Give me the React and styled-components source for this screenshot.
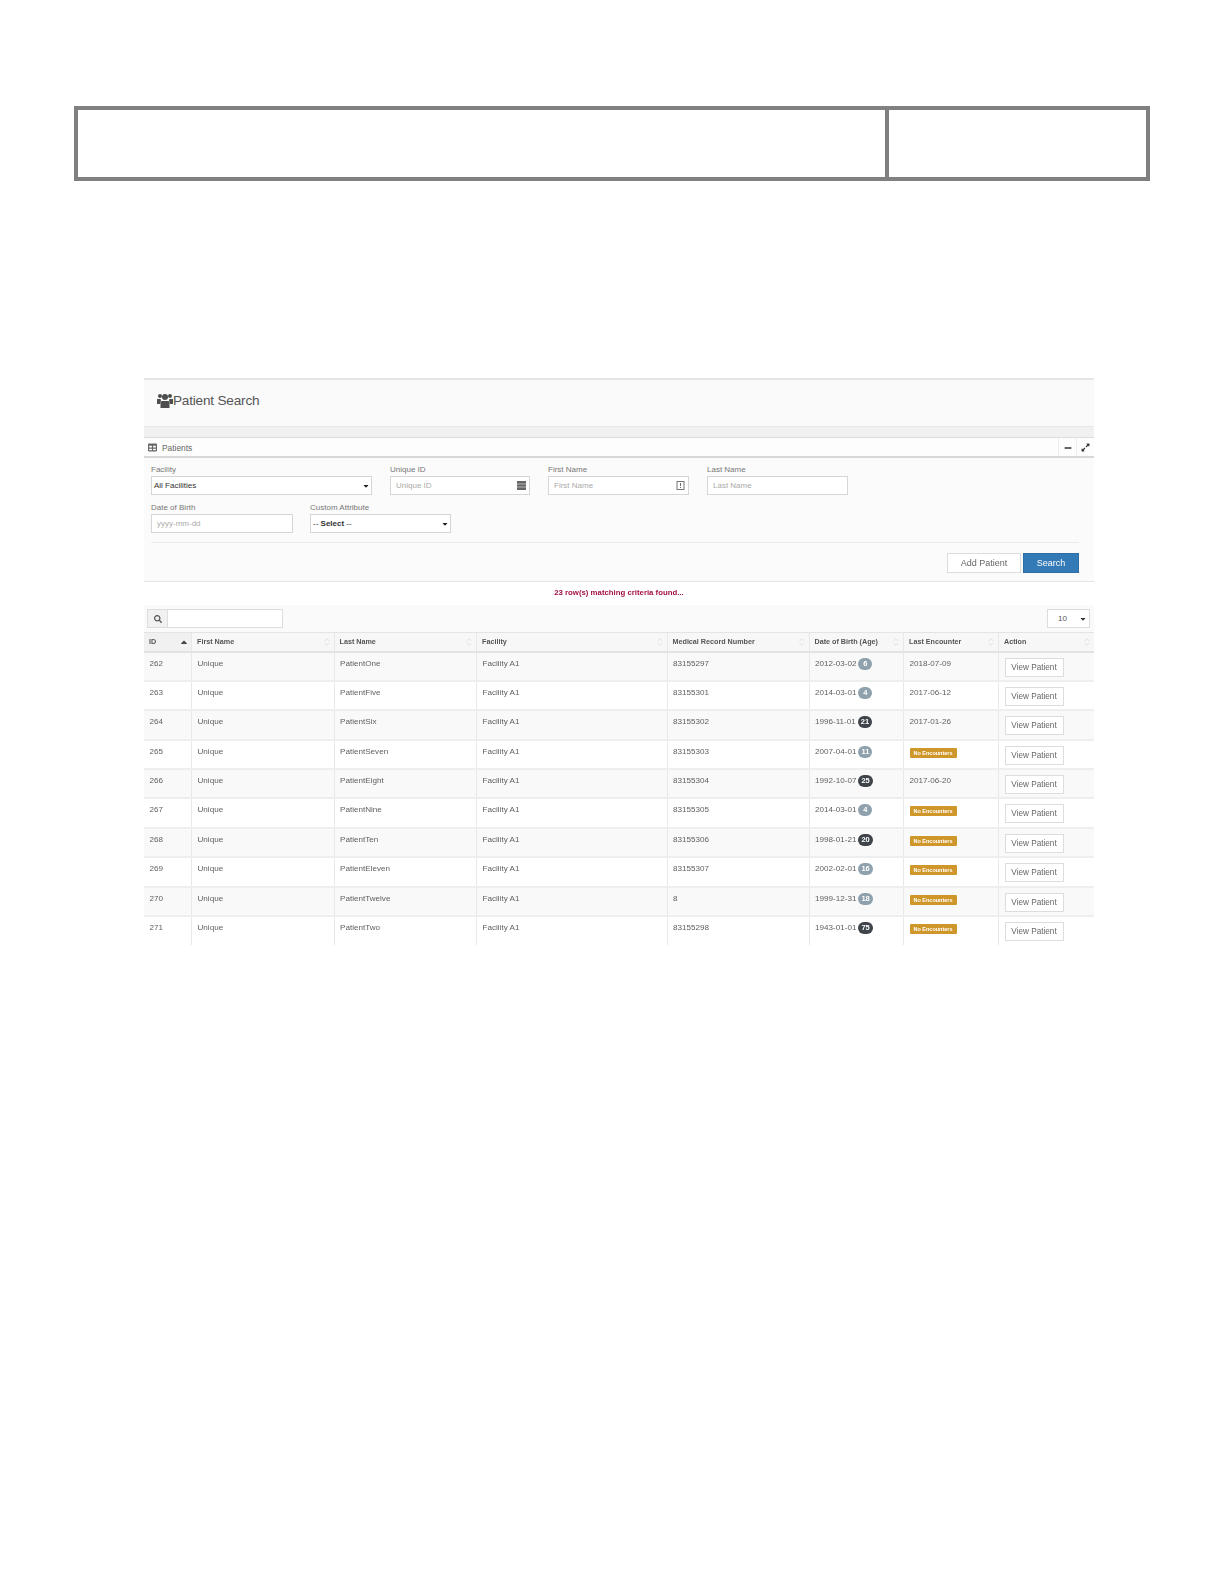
import React from 'react';
import styled, { createGlobalStyle } from 'styled-components';
import { FaTable, FaMinus, FaExpandAlt, FaSearch, FaCaretDown, FaCaretUp } from 'react-icons/fa';
import { LuChevronsUpDown } from 'react-icons/lu';

const GlobalStyle = createGlobalStyle`
  * { box-sizing: border-box; }
  html, body { margin: 0; padding: 0; background: #fff; }
  body { font-family: "Liberation Sans", Arial, sans-serif; color: #555; }
`;

const Page = styled.div`
  width: 1224px;
  height: 1584px;
  padding: 106px 74px 0;
  overflow: hidden;
`;

const TitleBox = styled.div`
  display: grid;
  grid-template-columns: 811px 1fr;
  height: 75px;
  border: 4px solid #808080;
`;

const TitleCell = styled.div`
  &:first-child { border-right: 4px solid #808080; }
`;

const Panel = styled.div`
  width: 950px;
  margin: 197px 0 0 70px;
  filter: blur(0.35px);
`;

const PageHead = styled.div`
  display: flex;
  align-items: center;
  gap: 0;
  height: 48px;
  padding: 0 0 5px 13px;
  background: #fafafa;
  border-top: 2px solid #e6e6e6;
  color: #555;
  font-size: 13.6px;
  letter-spacing: -0.2px;
`;

const UsersIcon = styled.svg`
  width: 16px;
  height: 15px;
  color: #4d4d4d;
`;

const Band = styled.div`
  height: 12px;
  background: #f1f1f1;
  border-top: 1px solid #e8e8e8;
  border-bottom: 1px solid #dcdcdc;
`;

const PanelBar = styled.div`
  display: flex;
  align-items: center;
  height: 20px;
  padding-left: 4px;
  background: #fdfdfd;
  border-bottom: 2px solid #d8d8d8;
  font-size: 8.4px;
  color: #666;
  svg { font-size: 9px; color: #666; }
`;

const PanelTitle = styled.span`
  flex: 1;
  margin-left: 5px;
  padding-top: 2px;
`;

const BarAction = styled.span`
  display: flex;
  align-items: center;
  justify-content: center;
  width: 18px;
  height: 18px;
  padding-top: 1px;
  border-left: 1px solid #eee;
  svg { font-size: ${p => p.$size || 8}px; color: #333; }
`;

const FormArea = styled.div`
  height: 124px;
  padding: 6px 15px 0 7px;
  background: #fbfbfb;
  border-bottom: 1px solid #e6e6e6;
`;

const FormRow = styled.div`
  display: flex;
  gap: ${p => p.$gap}px;
  height: ${p => p.$h || 38}px;
`;

const Field = styled.div`
  width: ${p => p.$w}px;
`;

const Label = styled.div`
  height: 12px;
  font-size: 8px;
  line-height: 12px;
  color: #777;
`;

const InputBox = styled.div`
  display: flex;
  align-items: center;
  justify-content: space-between;
  height: 19px;
  padding: 0 ${p => p.$select ? 1 : 3}px 0 ${p => p.$select ? 2 : 5}px;
  background: #fff;
  border: 1px solid #d6d6d6;
  font-size: 8px;
  color: ${p => p.$select ? '#333' : '#aaa'};
  svg { font-size: 8px; color: #222; }
`;

const Dark = styled.span`
  font-weight: ${p => p.$bold ? 700 : 400};
  color: #333;
`;

const FieldIcon = styled.svg`
  width: 9px;
  height: 9px;
  flex: none;
`;

const ButtonRow = styled.div`
  display: flex;
  justify-content: flex-end;
  gap: 2px;
  height: 38px;
  padding-top: 10px;
  border-top: 1px solid #ececec;
`;

const Button = styled.div`
  display: flex;
  align-items: center;
  justify-content: center;
  width: ${p => p.$w}px;
  height: 20px;
  font-size: 9px;
  color: ${p => p.$primary ? '#fff' : '#666'};
  background: ${p => p.$primary ? '#337ab7' : '#fff'};
  border: 1px solid ${p => p.$primary ? '#2e6da4' : '#ddd'};
`;

const Message = styled.div`
  height: 23px;
  font-size: 7.8px;
  font-weight: 700;
  line-height: 22px;
  text-align: center;
  color: #a5123f;
`;

const Toolbar = styled.div`
  display: flex;
  align-items: center;
  justify-content: space-between;
  height: 27px;
  padding: 0 4px 0 3px;
  background: #fafafa;
`;

const SearchGroup = styled.div`
  display: flex;
  width: 136px;
  height: 19px;
  background: #fff;
  border: 1px solid #ddd;
`;

const SearchAddon = styled.div`
  display: flex;
  align-items: center;
  justify-content: center;
  width: 20px;
  background: #f1f1f1;
  border-right: 1px solid #ddd;
  svg { font-size: 8px; color: #555; }
`;

const PageSize = styled.div`
  display: flex;
  align-items: center;
  justify-content: space-between;
  width: 43px;
  height: 19px;
  padding: 0 2px 0 10px;
  background: #fff;
  border: 1px solid #ddd;
  font-size: 8px;
  color: #555;
  svg { font-size: 8px; color: #333; }
`;

const Table = styled.table`
  width: 950px;
  table-layout: fixed;
  border-collapse: collapse;
  font-size: 8.1px;
  color: #5f5f5f;
`;

const Col = styled.col`
  width: ${p => p.$w}px;
`;

const Th = styled.th`
  height: 19px;
  padding: 0 5px;
  background: #f7f7f7;
  border-top: 1px solid #e4e4e4;
  border-bottom: 2px solid #e2e2e2;
  border-left: 1px solid #e8e8e8;
  font-size: 7.2px;
  font-weight: 700;
  text-align: left;
  color: #555;
  &:first-child { border-left: 0; background: #f1f1f1; }
`;

const ThInner = styled.div`
  display: flex;
  align-items: center;
  justify-content: space-between;
  svg { font-size: 10px; color: ${p => p.$active ? '#444' : '#ddd'}; flex: none; margin-right: -3px; }
`;

const Tr = styled.tr`
  background: ${p => p.$odd ? '#f9f9f9' : '#fff'};
`;

const Td = styled.td`
  height: 29.4px;
  padding: 5px 5.5px 0;
  vertical-align: top;
  border-top: 2px solid #eeeeee;
  border-left: 1px solid #e8e8e8;
  white-space: nowrap;
  line-height: 11px;
  &:first-child { border-left: 0; }
`;

const ActionTd = styled(Td)`
  padding-top: 5px;
`;

const AgeBadge = styled.span`
  display: inline-block;
  min-width: 14px;
  height: 12px;
  margin-left: 2px;
  padding: 0 3px;
  border-radius: 6px;
  background: ${p => p.$adult ? '#3f444a' : '#8fa1ad'};
  color: #fff;
  font-size: 7.5px;
  font-weight: 700;
  line-height: 12px;
  text-align: center;
  vertical-align: top;
`;

const NoEnc = styled.span`
  display: inline-block;
  width: 47px;
  height: 10px;
  margin-top: 2px;
  background: #cf962a;
  border-radius: 1px;
  color: #fff;
  font-size: 5.5px;
  font-weight: 700;
  line-height: 10px;
  text-align: center;
  vertical-align: top;
`;

const ViewButton = styled.div`
  display: flex;
  align-items: center;
  justify-content: center;
  width: 59px;
  height: 19px;
  background: #fff;
  border: 1px solid #ddd;
  font-size: 8.2px;
  color: #666;
`;

const columns = [
  { label: 'ID', w: 47.5 },
  { label: 'First Name', w: 142.5 },
  { label: 'Last Name', w: 142.5 },
  { label: 'Facility', w: 190.5 },
  { label: 'Medical Record Number', w: 142 },
  { label: 'Date of Birth (Age)', w: 94.5 },
  { label: 'Last Encounter', w: 95 },
  { label: 'Action', w: 95.5 },
];

const rows = [
  ['262', 'PatientOne', '83155297', '2012-03-02', '6', '2018-07-09'],
  ['263', 'PatientFive', '83155301', '2014-03-01', '4', '2017-06-12'],
  ['264', 'PatientSix', '83155302', '1996-11-01', '21', '2017-01-26'],
  ['265', 'PatientSeven', '83155303', '2007-04-01', '11', null],
  ['266', 'PatientEight', '83155304', '1992-10-07', '25', '2017-06-20'],
  ['267', 'PatientNine', '83155305', '2014-03-01', '4', null],
  ['268', 'PatientTen', '83155306', '1998-01-21', '20', null],
  ['269', 'PatientEleven', '83155307', '2002-02-01', '16', null],
  ['270', 'PatientTwelve', '8', '1999-12-31', '18', null],
  ['271', 'PatientTwo', '83155298', '1943-01-01', '75', null],
];

const App = () => (
  <Page>
    <GlobalStyle />
    <TitleBox>
      <TitleCell />
      <TitleCell />
    </TitleBox>

    <Panel>
      <PageHead>
        <UsersIcon viewBox="0 0 16 15" fill="currentColor">
          <circle cx="3" cy="3" r="2" />
          <circle cx="13" cy="3" r="2" />
          <circle cx="8" cy="4" r="3" />
          <path d="M0 6h3.5l.5 1.5L3 11H0zM16 6h-3.5l-.5 1.5 1 3.500h3z" />
          <path d="M4.500 8h7l1 1.500V15h-9V9.500z" />
        </UsersIcon>
        Patient Search
      </PageHead>
      <Band />
      <PanelBar>
        <FaTable />
        <PanelTitle>Patients</PanelTitle>
        <BarAction><FaMinus /></BarAction>
        <BarAction $size={9}><FaExpandAlt /></BarAction>
      </PanelBar>

      <FormArea>
        <FormRow $gap={18}>
          <Field $w={221}>
            <Label>Facility</Label>
            <InputBox $select><Dark>All Facilities</Dark><FaCaretDown /></InputBox>
          </Field>
          <Field $w={140}>
            <Label>Unique ID</Label>
            <InputBox>
              Unique ID
              <FieldIcon viewBox="0 0 9 9">
                <rect width="9" height="9" fill="#666" />
                <path d="M0 3h9M0 6h9" stroke="#ccc" strokeWidth="0.8" />
              </FieldIcon>
            </InputBox>
          </Field>
          <Field $w={141}>
            <Label>First Name</Label>
            <InputBox>
              First Name
              <FieldIcon viewBox="0 0 9 9">
                <rect x="1" y="0.500" width="7" height="8" fill="none" stroke="#777" />
                <path d="M4.500 2v3M4.500 6v1" stroke="#666" />
              </FieldIcon>
            </InputBox>
          </Field>
          <Field $w={141}>
            <Label>Last Name</Label>
            <InputBox>Last Name</InputBox>
          </Field>
        </FormRow>
        <FormRow $gap={17} $h={40}>
          <Field $w={142}>
            <Label>Date of Birth</Label>
            <InputBox>yyyy-mm-dd</InputBox>
          </Field>
          <Field $w={141}>
            <Label>Custom Attribute</Label>
            <InputBox $select><span>-- <Dark $bold>Select</Dark> --</span><FaCaretDown /></InputBox>
          </Field>
        </FormRow>
        <ButtonRow>
          <Button $w={74}>Add Patient</Button>
          <Button $w={56} $primary>Search</Button>
        </ButtonRow>
      </FormArea>

      <Message>23 row(s) matching criteria found...</Message>

      <Toolbar>
        <SearchGroup><SearchAddon><FaSearch /></SearchAddon></SearchGroup>
        <PageSize>10<FaCaretDown /></PageSize>
      </Toolbar>

      <Table>
        <colgroup>
          {columns.map(c => <Col key={c.label} $w={c.w} />)}
        </colgroup>
        <thead>
          <tr>
            {columns.map((c, i) => (
              <Th key={c.label}>
                <ThInner $active={i === 0}>
                  {c.label}
                  {i === 0 ? <FaCaretUp /> : <LuChevronsUpDown />}
                </ThInner>
              </Th>
            ))}
          </tr>
        </thead>
        <tbody>
          {rows.map((r, i) => (
            <Tr key={r[0]} $odd={i % 2 === 0}>
              <Td>{r[0]}</Td>
              <Td>Unique</Td>
              <Td>{r[1]}</Td>
              <Td>Facility A1</Td>
              <Td>{r[2]}</Td>
              <Td>{r[3]}<AgeBadge $adult={Number(r[4]) >= 20}>{r[4]}</AgeBadge></Td>
              <Td>{r[5] || <NoEnc>No Encounters</NoEnc>}</Td>
              <ActionTd><ViewButton>View Patient</ViewButton></ActionTd>
            </Tr>
          ))}
        </tbody>
      </Table>
    </Panel>
  </Page>
);

export default App;
